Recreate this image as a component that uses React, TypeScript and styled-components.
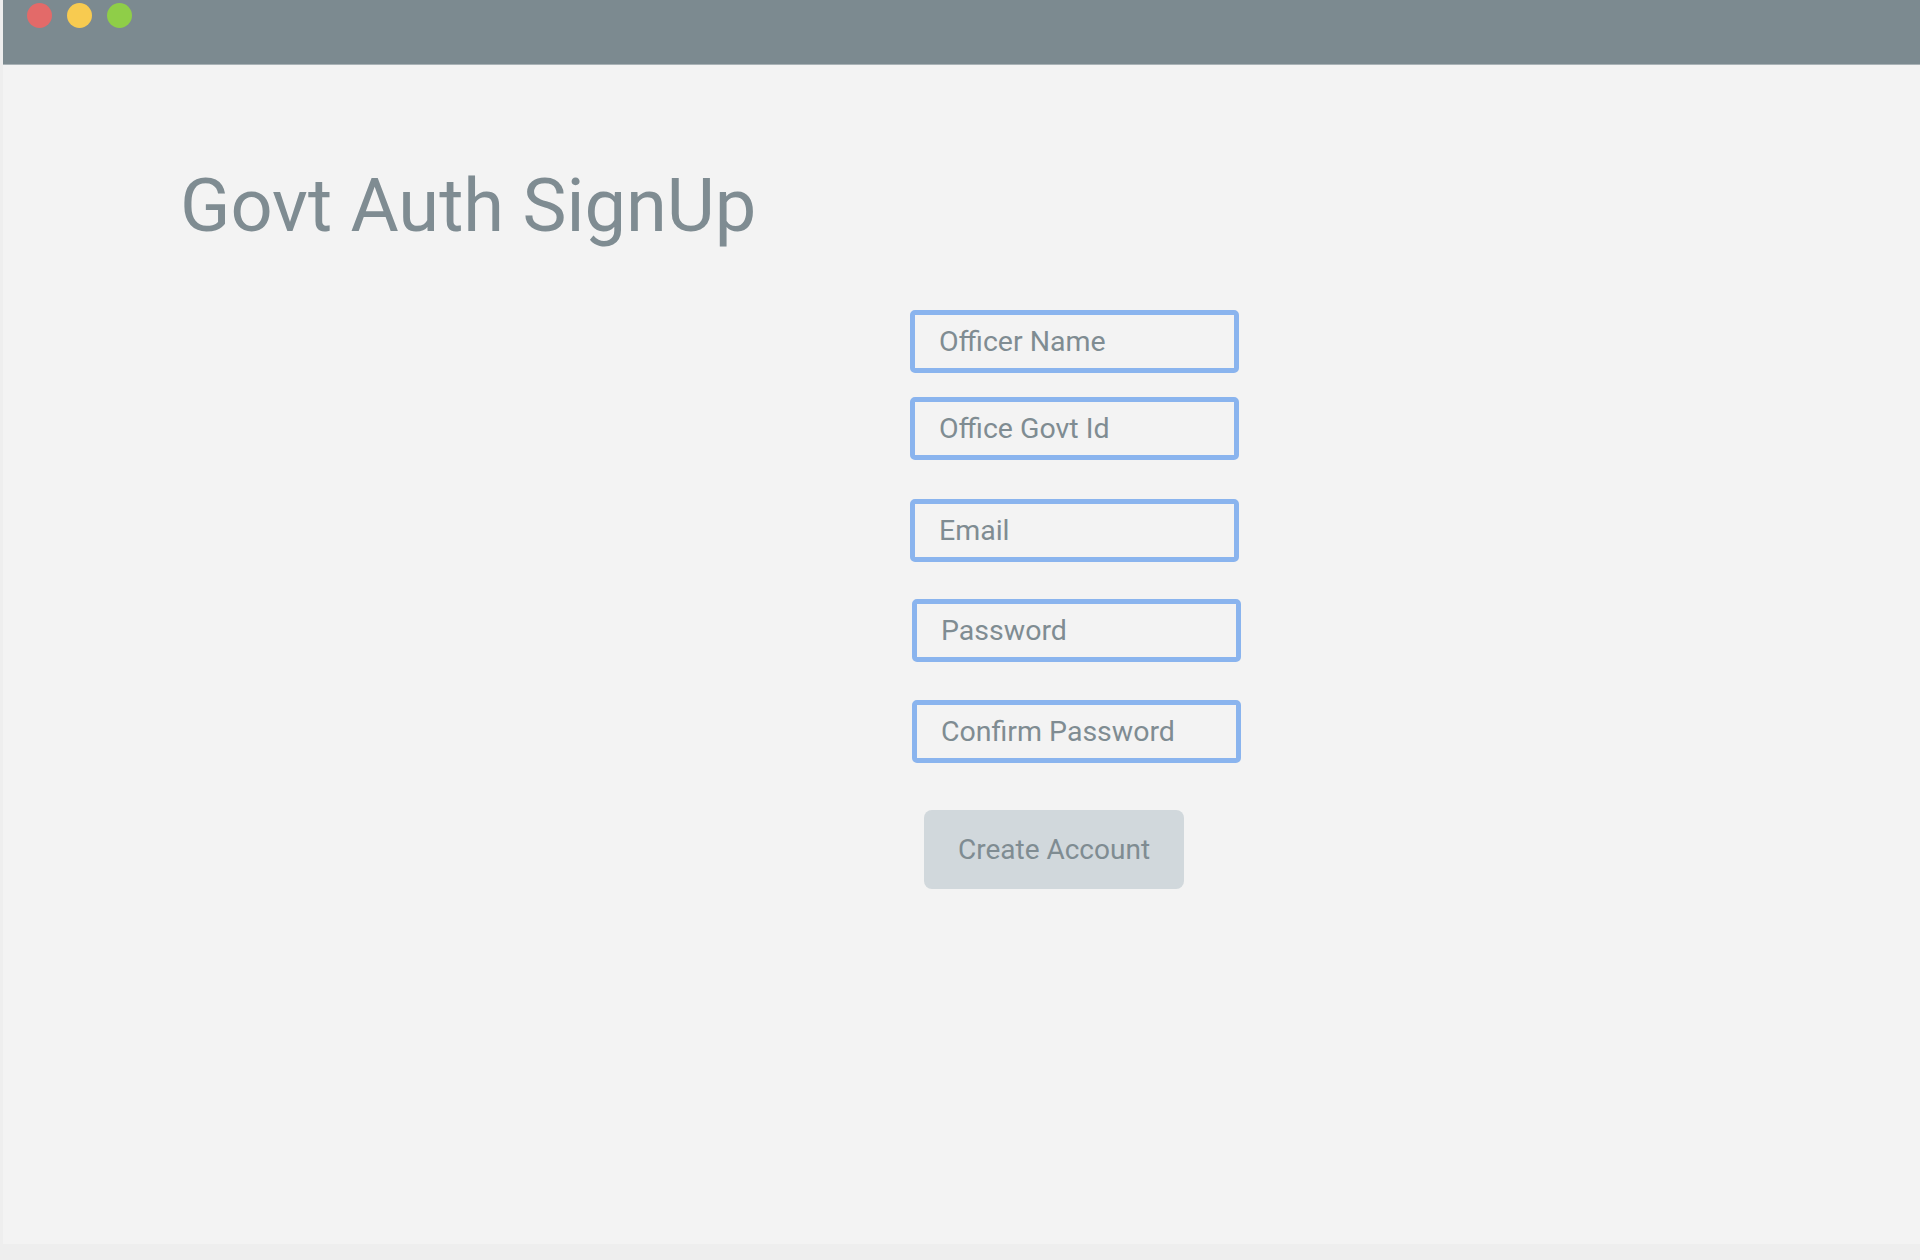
import React from "react";
import styled, { createGlobalStyle } from "styled-components";

const GlobalStyle = createGlobalStyle`
  html, body {
    margin: 0;
    padding: 0;
    background: #eeeeee;
  }
  * { box-sizing: border-box; }
`;

const Window = styled.div`
  margin-left: 3px;
  height: 1244px;
  background: #f3f3f3;
  display: flex;
  flex-direction: column;
  font-family: Roboto, "Noto Sans", sans-serif;
`;

const TitleBar = styled.div`
  height: 65px;
  flex: none;
  background: #7c8a90;
  border-bottom: 1px solid #a9b2b6;
  display: flex;
  align-items: flex-start;
  gap: 15px;
  padding: 3px 0 0 24px;
`;

const Dot = styled.span<{ $color: string }>`
  width: 25px;
  height: 25px;
  border-radius: 50%;
  background: ${(p) => p.$color};
`;

const Title = styled.h1`
  margin: 104px 0 0 0;
  padding-left: 177px;
  font-size: 74px;
  line-height: 74px;
  font-weight: 400;
  color: #7f8c92;
`;

const Form = styled.form`
  display: flex;
  flex-direction: column;
  align-items: flex-start;
  margin: 67px 0 0 907px;
`;

const Field = styled.input<{ $gap: number; $shift?: number }>`
  width: 329px;
  height: 63px;
  margin-top: ${(p) => p.$gap}px;
  margin-left: ${(p) => p.$shift ?? 0}px;
  padding: 0 24px;
  border: 5px solid #8ab4ee;
  border-radius: 5px;
  background: #f3f3f3;
  font-family: Roboto, "Noto Sans", sans-serif;
  font-size: 28.5px;
  color: #7f8c92;
  outline: none;
  &::placeholder {
    color: #7f8c92;
    opacity: 1;
  }
`;

const Submit = styled.button`
  width: 260px;
  height: 79px;
  margin: 47px 0 0 14px;
  border: none;
  border-radius: 8px;
  background: #d1d8dc;
  font-family: Roboto, "Noto Sans", sans-serif;
  font-size: 28px;
  color: #7f8c92;
  cursor: pointer;
`;

const fields = [
  { ph: "Officer Name", gap: 0, shift: 0, type: "text" },
  { ph: "Office Govt Id", gap: 24, shift: 0, type: "text" },
  { ph: "Email", gap: 39, shift: 0, type: "email" },
  { ph: "Password", gap: 37, shift: 2, type: "password" },
  { ph: "Confirm Password", gap: 38, shift: 2, type: "password" },
];

export default function App() {
  return (
    <>
      <GlobalStyle />
      <Window>
        <TitleBar>
          <Dot $color="#e36a69" />
          <Dot $color="#f8cb50" />
          <Dot $color="#8fce48" />
        </TitleBar>
        <Title>Govt Auth SignUp</Title>
        <Form onSubmit={(e) => e.preventDefault()}>
          {fields.map((f) => (
            <Field
              key={f.ph}
              type={f.type}
              placeholder={f.ph}
              $gap={f.gap}
              $shift={f.shift}
            />
          ))}
          <Submit type="submit">Create Account</Submit>
        </Form>
      </Window>
    </>
  );
}
